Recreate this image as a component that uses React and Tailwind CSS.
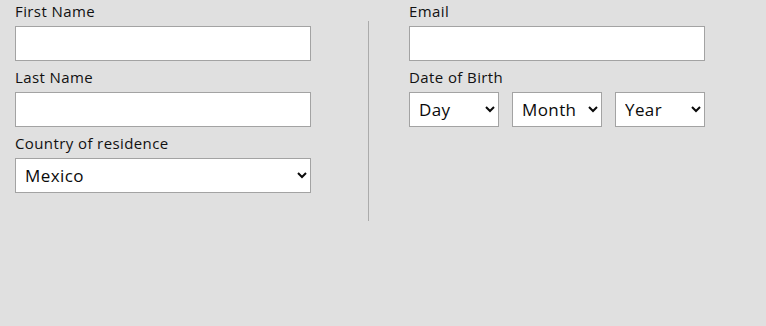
import React from "react";

const font = { fontFamily: "'Open Sans', Lato, sans-serif" };

function Label({ children }) {
  return (
    <label className="block text-[15px] leading-[20px] pt-[1px] pb-[5px] tracking-[0.4px] text-[#111]">
      {children}
    </label>
  );
}

function Input() {
  return (
    <input
      type="text"
      className="block w-[296px] h-[35px] bg-white border border-[#a3a3a3] outline-none px-2 text-[17px]"
    />
  );
}

function Select({ value, width, options }) {
  return (
    <select
      defaultValue={value}
      className={`block ${width} h-[35px] bg-white border border-[#a3a3a3] rounded-none pl-[5px] pr-[4px] text-[17px] tracking-[0.4px] text-[#0a0a0a] outline-none`}
    >
      {options.map((o) => (
        <option key={o}>{o}</option>
      ))}
    </select>
  );
}

export default function App() {
  return (
    <div className="w-[766px] h-[326px] bg-[#e0e0e0] overflow-hidden" style={font}>
      <div className="flex pl-[15px]">
        <div className="w-[296px] flex flex-col">
          <Label>First Name</Label>
          <Input />
          <div className="mt-[5px]">
            <Label>Last Name</Label>
            <Input />
          </div>
          <div className="mt-[5px]">
            <Label>Country of residence</Label>
            <Select value="Mexico" width="w-[296px]" options={["Mexico", "United States", "Canada"]} />
          </div>
        </div>
        <div className="ml-[57px] mt-[21px] w-px h-[200px] bg-[#ababab]" />
        <div className="ml-[40px] w-[296px] flex flex-col">
          <Label>Email</Label>
          <Input />
          <div className="mt-[5px]">
            <Label>Date of Birth</Label>
            <div className="flex gap-[13px]">
              <Select value="Day" width="w-[90px]" options={["Day"]} />
              <Select value="Month" width="w-[90px]" options={["Month"]} />
              <Select value="Year" width="w-[90px]" options={["Year"]} />
            </div>
          </div>
        </div>
      </div>
    </div>
  );
}
